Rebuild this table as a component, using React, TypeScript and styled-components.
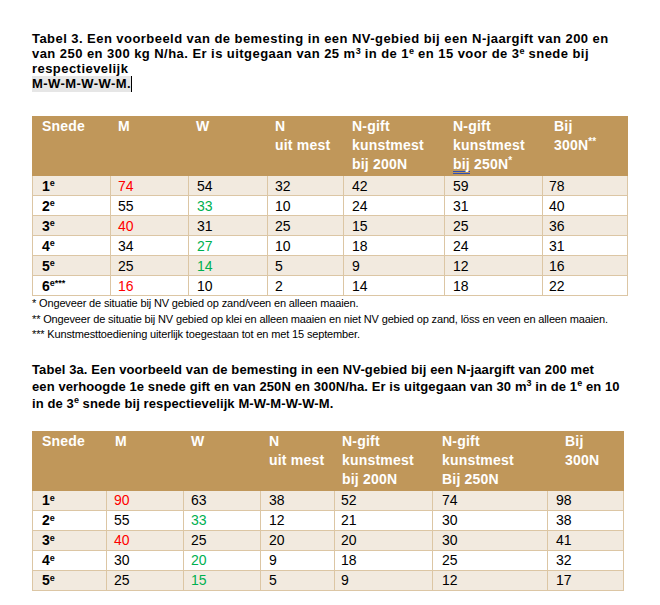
import React from "react";
import styled, { createGlobalStyle } from "styled-components";

const GlobalStyle = createGlobalStyle`
  html, body { margin: 0; padding: 0; background: #ffffff; }
  body { font-family: "Liberation Sans", Arial, sans-serif; color: #000; }
`;

const TAN = "#C0975A";
const SHADE = "#F2EADF";
const LINE = "#DCC6A4";
const RED = "#FF0000";
const GREEN = "#00B050";

const Page = styled.div`
  width: 660px;
  height: 605px;
  box-sizing: border-box;
  padding: 31px 0 0 32px;
  overflow: hidden;
`;

const Caption = styled.p<{ $lh: number; $gap: number; $track: number }>`
  margin: 0 0 ${(p) => p.$gap}px 0;
  font-size: 13px;
  font-weight: bold;
  letter-spacing: ${(p) => p.$track}px;
  line-height: ${(p) => p.$lh}px;
  white-space: nowrap;
`;

const Sup = styled.sup<{ $size?: number }>`
  font-size: ${(p) => p.$size ?? 9}px;
  letter-spacing: 0;
  line-height: 0;
  vertical-align: 0;
  position: relative;
  top: -0.5em;
`;

const Marked = styled.span`
  background: #e6e6e6;
  border-right: 1px solid #000;
  padding-bottom: 1px;
`;

const Squiggle = styled.span`
  border-bottom: 3px double #2f4fb5;
  line-height: 14px;
  display: inline-block;
`;

const Table = styled.table<{ $width: number }>`
  width: ${(p) => p.$width}px;
  border-collapse: collapse;
  table-layout: fixed;
`;

const HeadRow = styled.tr`
  height: 59px;
  background: ${TAN};
`;

const HeadCell = styled.th<{ $pad: number }>`
  padding: 0 0 0 ${(p) => p.$pad}px;
  border: 1px solid ${TAN};
  color: #ffffff;
  font-size: 14px;
  font-weight: bold;
  letter-spacing: 0.2px;
  line-height: 19px;
  text-align: left;
  vertical-align: top;
  white-space: nowrap;
`;

const BodyRow = styled.tr<{ $shade: boolean }>`
  height: 20px;
  background: ${(p) => (p.$shade ? SHADE : "#ffffff")};
`;

const Cell = styled.td<{ $pad: number; $color?: string; $bold?: boolean }>`
  padding: 0 0 0 ${(p) => p.$pad}px;
  border: 1px solid ${LINE};
  font-size: 14px;
  font-weight: ${(p) => (p.$bold ? "bold" : "normal")};
  color: ${(p) => p.$color ?? "#000"};
  line-height: 18px;
  vertical-align: middle;
  white-space: nowrap;
`;

const Notes = styled.div`
  margin: 0 0 18px 0;
  font-size: 11px;
  line-height: 15.5px;
  letter-spacing: -0.15px;
`;

type Val = { v: string; c?: string };
type Row = { label: string; stars?: string; vals: Val[] };

const r = (v: string | number, c?: string): Val => ({ v: String(v), c });

const rows1: Row[] = [
  { label: "1", vals: [r(74, RED), r(54), r(32), r(42), r(59), r(78)] },
  { label: "2", vals: [r(55), r(33, GREEN), r(10), r(24), r(31), r(40)] },
  { label: "3", vals: [r(40, RED), r(31), r(25), r(15), r(25), r(36)] },
  { label: "4", vals: [r(34), r(27, GREEN), r(10), r(18), r(24), r(31)] },
  { label: "5", vals: [r(25), r(14, GREEN), r(5), r(9), r(12), r(16)] },
  { label: "6", stars: "***", vals: [r(16, RED), r(10), r(2), r(14), r(18), r(22)] },
];

const rows2: Row[] = [
  { label: "1", vals: [r(90, RED), r(63), r(38), r(52), r(74), r(98)] },
  { label: "2", vals: [r(55), r(33, GREEN), r(12), r(21), r(30), r(38)] },
  { label: "3", vals: [r(40, RED), r(25), r(20), r(20), r(30), r(41)] },
  { label: "4", vals: [r(30), r(20, GREEN), r(9), r(18), r(25), r(32)] },
  { label: "5", vals: [r(25), r(15, GREEN), r(5), r(9), r(12), r(17)] },
];

type TableSpec = {
  width: number;
  cols: number[];
  headPad: number[];
  bodyPad: number[];
  heads: React.ReactNode[];
  rows: Row[];
};

const DataTable: React.FC<{ spec: TableSpec }> = ({ spec }) => (
  <Table $width={spec.width}>
    <colgroup>
      {spec.cols.map((w, i) => (
        <col key={i} style={{ width: w }} />
      ))}
    </colgroup>
    <thead>
      <HeadRow>
        {spec.heads.map((h, i) => (
          <HeadCell key={i} $pad={spec.headPad[i]}>
            {h}
          </HeadCell>
        ))}
      </HeadRow>
    </thead>
    <tbody>
      {spec.rows.map((row, ri) => (
        <BodyRow key={ri} $shade={ri % 2 === 0}>
          <Cell $pad={spec.bodyPad[0]} $bold>
            {row.label}
            <Sup $size={9}>e{row.stars ?? ""}</Sup>
          </Cell>
          {row.vals.map((val, ci) => (
            <Cell key={ci} $pad={spec.bodyPad[ci + 1]} $color={val.c}>
              {val.v}
            </Cell>
          ))}
        </BodyRow>
      ))}
    </tbody>
  </Table>
);

const spec1: TableSpec = {
  width: 595,
  cols: [78, 78, 79, 76, 101, 98, 85],
  headPad: [9, 7, 7, 7, 8, 8, 11],
  bodyPad: [9, 7, 8, 7, 8, 8, 6],
  heads: [
    "Snede",
    "M",
    "W",
    <>N<br />uit mest</>,
    <>N-gift<br />kunstmest<br />bij 200N</>,
    <>N-gift<br />kunstmest<br /><Squiggle>bij</Squiggle> 250N<Sup $size={10}>*</Sup></>,
    <>Bij<br />300N<Sup $size={10}>**</Sup></>,
  ],
  rows: rows1,
};

const spec2: TableSpec = {
  width: 591,
  cols: [74, 77, 77, 74, 98, 115, 76],
  headPad: [9, 8, 7, 8, 7, 9, 17],
  bodyPad: [9, 7, 7, 8, 6, 9, 8],
  heads: [
    "Snede",
    "M",
    "W",
    <>N<br />uit mest</>,
    <>N-gift<br />kunstmest<br />bij 200N</>,
    <>N-gift<br />kunstmest<br />Bij 250N</>,
    <>Bij<br />300N</>,
  ],
  rows: rows2,
};

export default function App() {
  return (
    <Page>
      <GlobalStyle />
      <Caption $lh={15} $gap={25} $track={0.45}>
        Tabel 3. Een voorbeeld van de bemesting in een NV-gebied bij een N-jaargift van 200 en
        <br />
        van 250 en 300 kg N/ha. Er is uitgegaan van 25 m<Sup>3</Sup> in de 1<Sup>e</Sup> en 15 voor de 3
        <Sup>e</Sup> snede bij
        <br />
        respectievelijk
        <br />
        <Marked>M-W-M-W-W-M.</Marked>
      </Caption>
      <DataTable spec={spec1} />
      <Notes>
        * Ongeveer de situatie bij NV gebied op zand/veen en alleen maaien.
        <br />
        ** Ongeveer de situatie bij NV gebied op klei en alleen maaien en niet NV gebied op zand, löss en veen en alleen maaien.
        <br />
        *** Kunstmesttoediening uiterlijk toegestaan tot en met 15 september.
      </Notes>
      <Caption $lh={17} $gap={19} $track={0.1}>
        Tabel 3a. Een voorbeeld van de bemesting in een NV-gebied bij een N-jaargift van 200 met
        <br />
        een verhoogde 1e snede gift en van 250N en 300N/ha. Er is uitgegaan van 30 m<Sup>3</Sup> in de 1
        <Sup>e</Sup> en 10
        <br />
        in de 3<Sup>e</Sup> snede bij respectievelijk M-W-M-W-W-M.
      </Caption>
      <DataTable spec={spec2} />
    </Page>
  );
}
